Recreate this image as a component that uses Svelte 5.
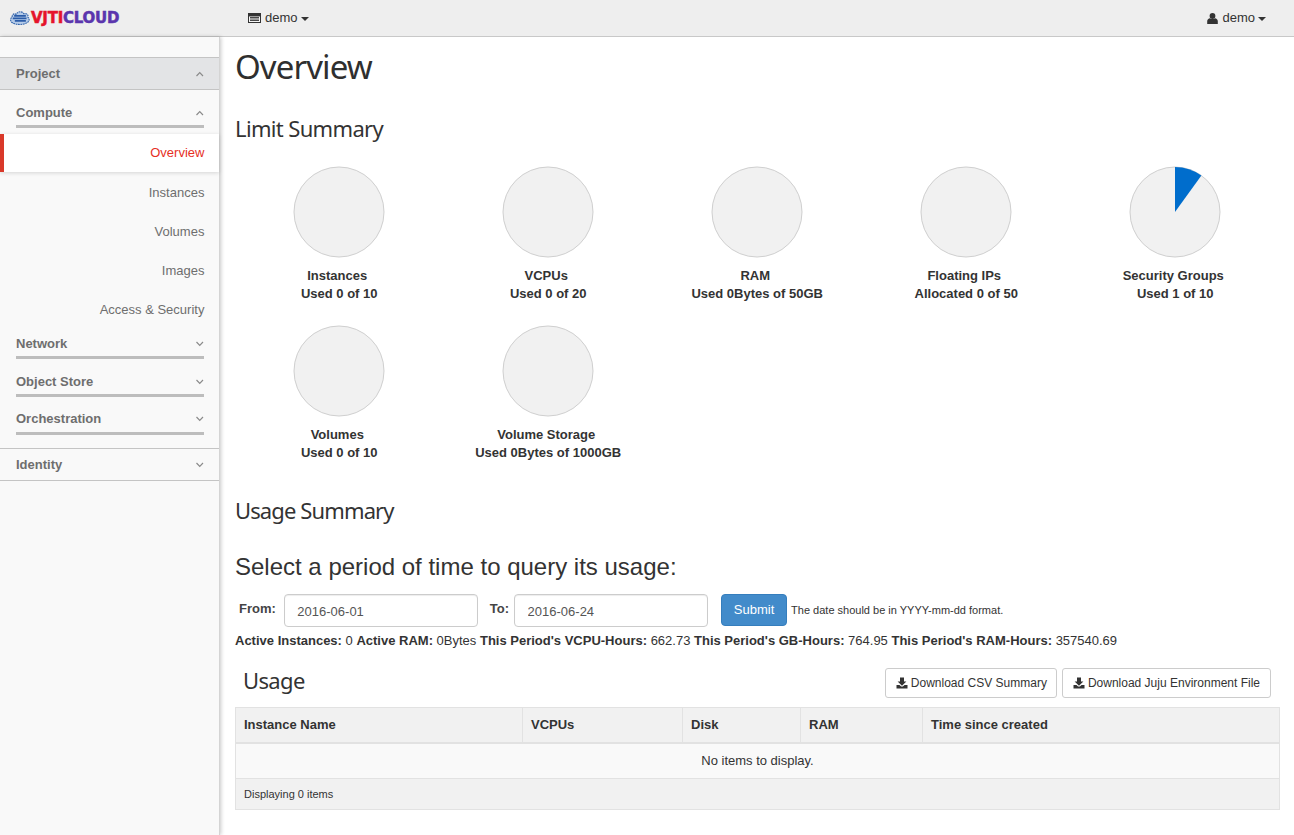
<script>
  const pies = [
    { t: 'Instances', u: 'Used 0 of 10' },
    { t: 'VCPUs', u: 'Used 0 of 20' },
    { t: 'RAM', u: 'Used 0Bytes of 50GB' },
    { t: 'Floating IPs', u: 'Allocated 0 of 50' },
    { t: 'Security Groups', u: 'Used 1 of 10', wedge: true },
    { t: 'Volumes', u: 'Used 0 of 10' },
    { t: 'Volume Storage', u: 'Used 0Bytes of 1000GB' }
  ];
  const computeItems = ['Instances', 'Volumes', 'Images', 'Access & Security'];
  const cols = [
    { n: 'Instance Name', w: 287 },
    { n: 'VCPUs', w: 160 },
    { n: 'Disk', w: 118 },
    { n: 'RAM', w: 122 },
    { n: 'Time since created', w: 357 }
  ];
</script>

{#snippet chev(up)}
  <svg class="chev" width="9" height="6" viewBox="0 0 9 6" aria-hidden="true">
    <path d={up ? 'M1.5 5 L4.75 1.7 L8 5' : 'M1.5 1 L4.75 4.3 L8 1'} fill="none" stroke="#8a8a8a" stroke-width="1.2" />
  </svg>
{/snippet}

{#snippet download()}
  <svg class="dl" width="12" height="12" viewBox="0 0 12 12" aria-hidden="true">
    <path d="M4 0.5h4v4h2.4L6 8.8 1.6 4.5H4z M0.5 8h3l1.6 1.6h1.8L8.5 8h3v3.5H0.5z" fill="#333" />
  </svg>
{/snippet}

<header class="top">
  <div class="logo">
    <svg width="20" height="14" viewBox="0 0 29 20" preserveAspectRatio="none" aria-hidden="true">
      <path d="M4 17 C0 16 0 10 3 9 C3 4 7 3 9 5 C11 0 18 0 20 4 C24 3 27 5 26 9 C29 11 28 16 24 17 C20 20 8 20 4 17 Z" fill="#b5cbe8" stroke="#3566ad" stroke-width="1.6" stroke-dasharray="2.5 1" />
      <path d="M6 7h17M4 10.5h20M7 14h16" stroke="#2b5ca8" stroke-width="2.6" />
    </svg>
    <span class="lg"><span class="red">VJTI</span><span class="pur">CLOUD</span></span>
  </div>
  <div class="project">
    <svg width="13" height="10" viewBox="0 0 13 10" aria-hidden="true">
      <rect x="0.5" y="0.5" width="12" height="9" fill="#f5f5f5" stroke="#333" />
      <path d="M0 1h13v2H0z M2 4.5h9M2 6h9M2 7.5h9" fill="#333" stroke="#333" stroke-width="0.9" />
    </svg>
    <span>demo</span><i class="caret"></i>
  </div>
  <div class="user">
    <svg width="11" height="11" viewBox="0 0 11 11" aria-hidden="true">
      <circle cx="5.5" cy="3" r="2.9" fill="#333" />
      <path d="M0.2 11 V8.2 C0.2 6.4 1.6 5.5 3 5.2 C4.5 6.4 6.5 6.4 8 5.2 C9.4 5.5 10.8 6.4 10.8 8.2 V11 Z" fill="#333" />
    </svg>
    <span>demo</span><i class="caret"></i>
  </div>
</header>

<div class="shell">
  <nav class="side">
    <div class="panel active">
      <span>Project</span>{@render chev(true)}
    </div>
    <div class="group open">
      <span>Compute</span>{@render chev(true)}
    </div>
    <a class="item current">Overview</a>
    {#each computeItems as it}
      <a class="item">{it}</a>
    {/each}
    <div class="group g1"><span>Network</span>{@render chev(false)}</div>
    <div class="group g2"><span>Object Store</span>{@render chev(false)}</div>
    <div class="group g3"><span>Orchestration</span>{@render chev(false)}</div>
    <div class="panel last"><span>Identity</span>{@render chev(false)}</div>
  </nav>

  <main class="main">
    <h1>Overview</h1>
    <h3 class="limit">Limit Summary</h3>
    <div class="pies">
      {#each pies as p}
        <div class="pie">
          <svg width="92" height="92" viewBox="0 0 92 92" aria-hidden="true">
            <circle cx="46" cy="46" r="45" fill="#f1f1f1" stroke="#cfcfcf" stroke-width="1" />
            {#if p.wedge}
              <path d="M46 46 L46 1 A45 45 0 0 1 72.4 9.6 Z" fill="#006dcc" />
            {/if}
          </svg>
          <strong class="title">{p.t}</strong>
          <strong class="used">{p.u}</strong>
        </div>
      {/each}
    </div>

    <h3 class="usum">Usage Summary</h3>
    <h2 class="period">Select a period of time to query its usage:</h2>
    <form class="query">
      <label class="from" for="f">From:</label>
      <input id="f" value="2016-06-01" />
      <label class="to" for="t">To:</label>
      <input id="t" value="2016-06-24" />
      <button type="button" class="submit">Submit</button>
      <small>The date should be in YYYY-mm-dd format.</small>
    </form>
    <p class="stats">
      <b>Active Instances:</b> 0 <b>Active RAM:</b> 0Bytes <b>This Period's VCPU-Hours:</b> 662.73 <b>This Period's GB-Hours:</b> 764.95 <b>This Period's RAM-Hours:</b> 357540.69
    </p>

    <div class="tablehead">
      <h3>Usage</h3>
      <div class="actions">
        <button type="button" class="btn">{@render download()}Download CSV Summary</button>
        <button type="button" class="btn">{@render download()}Download Juju Environment File</button>
      </div>
    </div>
    <table>
      <colgroup>
        {#each cols as c}<col style:width="{c.w}px" />{/each}
      </colgroup>
      <thead>
        <tr>{#each cols as c}<th>{c.n}</th>{/each}</tr>
      </thead>
      <tbody>
        <tr><td class="empty" colspan="5">No items to display.</td></tr>
      </tbody>
      <tfoot>
        <tr><td colspan="5">Displaying 0 items</td></tr>
      </tfoot>
    </table>
  </main>
</div>

<style>
  :global(body) {
    margin: 0;
    background: #fff;
    font-family: "Liberation Sans", Arial, sans-serif;
    font-size: 13px;
    color: #333;
    line-height: 18px;
  }
  .top {
    height: 36px;
    background: #eeeeee;
    border-bottom: 1px solid #c8c8c8;
    display: flex;
    align-items: center;
    font-size: 13px;
    color: #333;
  }
  .logo {
    width: 248px;
    padding-left: 10px;
    box-sizing: border-box;
    display: flex;
    align-items: center;
    gap: 1px;
  }
  .lg {
    font-family: "DejaVu Sans", sans-serif;
    font-weight: 700;
    font-size: 15px;
    letter-spacing: -0.25px;
    -webkit-text-stroke: 0.5px currentColor;
  }
  .red { color: #e5142b; }
  .pur { color: #5b35ad; }
  .project, .user { display: flex; align-items: center; gap: 4px; }
  .user { margin-left: auto; margin-right: 28px; }
  .caret {
    display: inline-block;
    width: 0;
    height: 0;
    border-left: 4px solid transparent;
    border-right: 4px solid transparent;
    border-top: 4px solid #333;
    margin-top: 2px;
    margin-left: -1px;
  }
  .shell { display: flex; min-height: 798px; }
  .side {
    width: 219px;
    flex: none;
    background: #f9f9f9;
    border-right: 1px solid #d4d4d4;
    box-shadow: 1px 0 4px rgba(0,0,0,.22);
    padding-top: 20px;
    box-sizing: content-box;
    font-weight: 700;
    color: #6e6e6e;
    position: relative;
  }
  .side > div { display: flex; justify-content: space-between; align-items: center; }
  .panel {
    height: 33px;
    box-sizing: border-box;
    padding: 0 15px 0 16px;
    border-top: 1px solid #c4c4c4;
    border-bottom: 1px solid #c4c4c4;
  }
  .panel.active { background: #e3e4e6; }
  .panel.last { margin-top: 13px; }
  .group {
    margin: 0 15px 0 16px;
    border-bottom: 3px solid #bdbdbd;
    padding-bottom: 3px;
  }
  .group.open { padding-top: 14px; margin-bottom: 6px; }
  .group.g1 { padding-top: 6px; }
  .group.g2 { margin-top: 14px; }
  .group.g3 { margin-top: 13px; padding-bottom: 4px; }
  .item {
    display: block;
    height: 39px;
    line-height: 39px;
    text-align: right;
    padding-right: 14.6px;
    font-weight: 400;
    color: #6e6e6e;
  }
  .item.current {
    height: 38px;
    line-height: 37px;
    margin-bottom: 1px;
    background: #fff;
    color: #e6301f;
    border-left: 4px solid #d9392a;
    box-shadow: 0 1px 4px rgba(0,0,0,.15);
    position: relative;
  }
  .main { flex: 1; padding: 0 14px 0 15px; min-width: 0; }
  h1 {
    font-family: "Noto Sans", sans-serif;
    font-weight: 400;
    font-size: 33px;
    letter-spacing: -0.9px;
    line-height: 40px;
    margin: 10px 0 0 0;
    color: #2f2f2f;
  }
  h3 {
    font-family: "Noto Sans", sans-serif;
    font-weight: 400;
    font-size: 22px;
    letter-spacing: -0.65px;
    line-height: 26px;
    margin: 0;
    color: #333;
  }
  .limit { margin: 28px 0 0 0; }
  .pies {
    display: grid;
    grid-template-columns: repeat(5, 209px);
    margin-top: 25px;
    row-gap: 22px;
  }
  .pie { display: flex; flex-direction: column; align-items: center; text-align: center; }
  .pie svg { display: block; margin-bottom: 9px; margin-left: -1px; }
  .title { padding-right: 4.5px; }
  .used { padding-right: 0.6px; }
  .usum { margin: 35px 0 0 0; letter-spacing: -0.88px; }
  .period {
    font-weight: 400;
    font-size: 24px;
    line-height: 30px;
    margin: 29px 0 0;
    color: #333;
  }
  .query { display: flex; align-items: center; margin-top: 12px; height: 33px; }
  .query label { font-weight: 700; color: #444; margin-top: -3px; }
  .from { margin-left: 4px; margin-right: 8px; }
  .to { margin-left: 12px; margin-right: 5px; }
  input {
    width: 194px;
    height: 33px;
    box-sizing: border-box;
    border: 1px solid #ccc;
    border-radius: 4px;
    padding: 1px 12.5px 0;
    font: inherit;
    color: #555;
    background: #fff;
    box-shadow: inset 0 1px 1px rgba(0,0,0,.075);
  }
  .submit {
    margin-left: 13px;
    margin-bottom: 1px;
    width: 66px;
    height: 32px;
    box-sizing: border-box;
    background: #428bca;
    border: 1px solid #357ebd;
    border-radius: 4px;
    color: #fff;
    font: inherit;
    padding: 0;
  }
  small { font-size: 11px; margin: -2px 0 0 4px; color: #333; }
  .stats { margin: 5px 0 0; }
  .tablehead {
    display: flex;
    justify-content: space-between;
    align-items: center;
    margin-top: 18px;
    height: 30px;
  }
  .tablehead h3 { margin: -6px 0 0 8px; }
  .actions { display: flex; gap: 5px; margin-right: 9px; }
  .btn {
    height: 30px;
    box-sizing: border-box;
    padding: 0 10px;
    background: #fff;
    border: 1px solid #ccc;
    border-radius: 3px;
    font: inherit;
    font-size: 12px;
    color: #333;
    display: flex;
    align-items: center;
    gap: 3px;
  }
  .btn:first-child { padding-right: 9px; }
  table {
    width: 1044px;
    table-layout: fixed;
    border-collapse: collapse;
    margin-top: 9px;
    border: 1px solid #e2e2e2;
  }
  th {
    text-align: left;
    padding: 0 8px;
    height: 35px;
    background: #f1f1f1;
    border-right: 1px solid #e2e2e2;
    border-bottom: 2px solid #e2e2e2;
    box-sizing: border-box;
    font-weight: 700;
  }
  .empty {
    text-align: center;
    height: 34px;
    background: #f9f9f9;
    border-bottom: 1px solid #e2e2e2;
    padding: 0;
  }
  tfoot td {
    background: #f1f1f1;
    height: 30px;
    padding: 0 8px;
    font-size: 11px;
  }
</style>
